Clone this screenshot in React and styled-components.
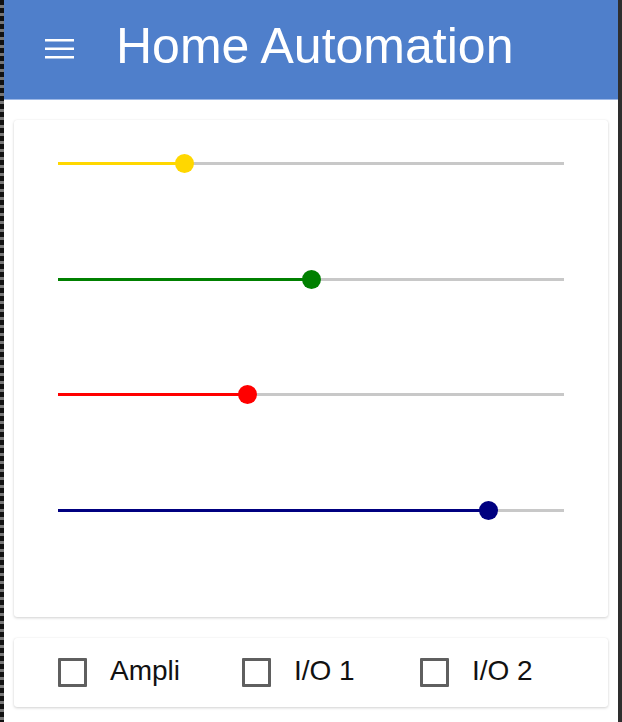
import React, { useState } from "react";
import styled, { createGlobalStyle } from "styled-components";

const GlobalStyle = createGlobalStyle`
  html, body {
    margin: 0;
    padding: 0;
    background: #2e2e2e;
    font-family: "Liberation Sans", Arial, sans-serif;
  }
`;

const Frame = styled.div`
  display: flex;
  width: 622px;
  height: 722px;
  overflow: hidden;
`;

const LeftEdge = styled.div`
  width: 4px;
  flex-shrink: 0;
  background: repeating-linear-gradient(
    to bottom,
    #111 0px,
    #111 5px,
    #777 5px,
    #777 8px
  );
`;

const Page = styled.div`
  width: 614px;
  flex-shrink: 0;
  background: #fff;
  display: flex;
  flex-direction: column;
`;

const Header = styled.header`
  height: 99px;
  background: #4f7fcb;
  border-bottom: 1px solid #9db8e6;
  display: flex;
  align-items: center;
  padding-left: 41px;
  color: #fff;
`;

const MenuButton = styled.div`
  width: 29px;
  display: flex;
  align-items: center;
  margin-top: -2px;
`;

const Title = styled.h1`
  margin: -8px 0 0 42px;
  font-size: 50px;
  font-weight: 400;
  line-height: 1;
`;

const Content = styled.main`
  padding: 20px 10px 0 10px;
  display: flex;
  flex-direction: column;
  gap: 21px;
`;

const Card = styled.section`
  background: #fff;
  border-radius: 3px;
  box-shadow: 0 1px 3px rgba(0, 0, 0, 0.18), 0 0 1px rgba(0, 0, 0, 0.08);
`;

const SliderCard = styled(Card)`
  padding: 36px 44px 100px 44px;
  display: flex;
  flex-direction: column;
  gap: 101.67px;
`;

const SliderRow = styled.div`
  position: relative;
  height: 14px;
`;

const Track = styled.div`
  position: absolute;
  left: 0;
  right: 0;
  top: 6px;
  height: 3px;
  background: #c8c8c8;
`;

const Fill = styled.div`
  position: absolute;
  left: 0;
  top: 6px;
  height: 3px;
  background: ${(p) => p.$color};
`;

const Thumb = styled.div`
  position: absolute;
  top: -2px;
  width: 19px;
  height: 19px;
  margin-left: -9.5px;
  border-radius: 50%;
  background: ${(p) => p.$color};
`;

const CheckCard = styled(Card)`
  height: 69px;
  display: flex;
  align-items: center;
  padding-left: 44px;
`;

const CheckItem = styled.label`
  width: ${(p) => p.$width}px;
  display: flex;
  align-items: center;
  gap: 23px;
  cursor: pointer;
`;

const Box = styled.span`
  width: 23px;
  height: 23px;
  border: 3px solid #5f5f5f;
  border-radius: 1px;
  background: ${(p) => (p.$checked ? "#5f5f5f" : "transparent")};
`;

const Label = styled.span`
  font-size: 28px;
  color: #111;
  margin-top: -2px;
`;

const sliders = [
  { color: "#ffd700", value: 25 },
  { color: "#008000", value: 50 },
  { color: "#ff0000", value: 37.5 },
  { color: "#000080", value: 85 },
];

function Slider({ color, value }) {
  return (
    <SliderRow>
      <Track />
      <Fill $color={color} style={{ width: `${value}%` }} />
      <Thumb $color={color} style={{ left: `${value}%` }} />
    </SliderRow>
  );
}

function Check({ label, width }) {
  const [checked, setChecked] = useState(false);
  return (
    <CheckItem $width={width} onClick={() => setChecked(!checked)}>
      <Box $checked={checked} />
      <Label>{label}</Label>
    </CheckItem>
  );
}

export default function App() {
  return (
    <Frame>
      <GlobalStyle />
      <LeftEdge />
      <Page>
        <Header>
          <MenuButton>
            <svg width="29" height="20" viewBox="0 0 29 20">
              <rect x="0" y="0" width="29" height="2.5" fill="#fff" />
              <rect x="0" y="8.5" width="29" height="2.5" fill="#fff" />
              <rect x="0" y="17" width="29" height="2.5" fill="#fff" />
            </svg>
          </MenuButton>
          <Title>Home Automation</Title>
        </Header>
        <Content>
          <SliderCard>
            {sliders.map((s, i) => (
              <Slider key={i} color={s.color} value={s.value} />
            ))}
          </SliderCard>
          <CheckCard>
            <Check label="Ampli" width={184} />
            <Check label="I/O 1" width={178} />
            <Check label="I/O 2" width={160} />
          </CheckCard>
        </Content>
      </Page>
    </Frame>
  );
}
